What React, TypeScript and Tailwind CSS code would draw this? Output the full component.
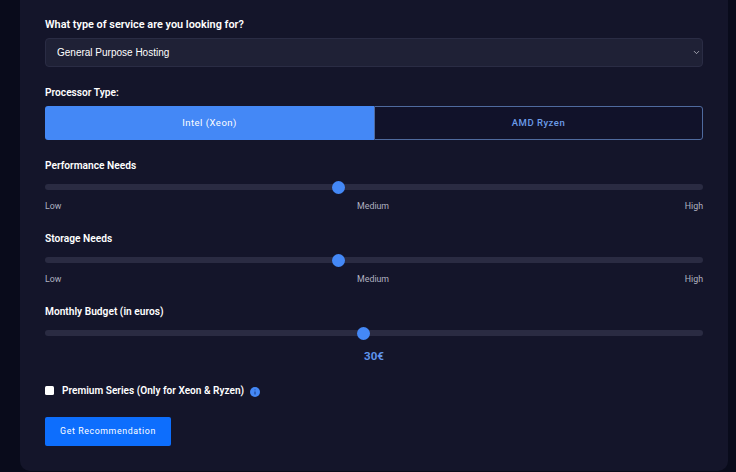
import { ChevronDown } from "lucide-react";

const rangeClass =
  "block w-full h-[6px] appearance-none rounded-[3px] bg-[#2a2b42] cursor-pointer outline-none [&::-webkit-slider-thumb]:appearance-none [&::-webkit-slider-thumb]:w-[13px] [&::-webkit-slider-thumb]:h-[13px] [&::-webkit-slider-thumb]:rounded-full [&::-webkit-slider-thumb]:bg-[#4488f6]";

const labelClass = "block text-[10.2px] leading-[14px] font-semibold text-white";

function Scale({ label, value }: { label: string; value: number }) {
  return (
    <div>
      <label className={labelClass}>{label}</label>
      <div className="mt-[7px] flex h-[14px] items-center">
        <input type="range" min={0} max={1000} defaultValue={value} className={rangeClass} />
      </div>
      <div className="mt-[5px] flex justify-between text-[8.8px] leading-[14px] text-[#b0b2c0]">
        <span>Low</span>
        <span>Medium</span>
        <span>High</span>
      </div>
    </div>
  );
}

export default function App() {
  return (
    <div className="h-[472px] overflow-hidden bg-[#090b1b] font-['Roboto',sans-serif] pl-[20px] pr-[8px]">
      <div className="h-[471px] rounded-b-[10px] bg-[#14152a] px-[25px] pt-[18px]">
        <label className="block text-[10.9px] leading-[14px] font-semibold text-white">
          What type of service are you looking for?
        </label>
        <div className="relative mt-[6px]">
          <select className="block h-[29px] w-full appearance-none rounded-[4px] border border-[#2a2c44] bg-[#1f2136] pl-[11px] font-['Liberation_Sans',sans-serif] text-[10px] text-white outline-none">
            <option>General Purpose Hosting</option>
            <option>Game Server Hosting</option>
            <option>Storage Hosting</option>
          </select>
          <ChevronDown className="pointer-events-none absolute right-[2px] top-[10px] h-[9px] w-[9px] text-[#c8c9d2]" strokeWidth={2} />
        </div>

        <div className={`mt-[19px] ${labelClass}`}>Processor Type:</div>
        <div className="mt-[6px] flex h-[34px]">
          <button className="w-1/2 rounded-l-[3px] bg-[#4488f6] text-[9.5px] tracking-[0.5px] text-white">
            Intel (Xeon)
          </button>
          <button className="w-1/2 rounded-r-[3px] border border-[#4f6a9e] bg-[#11122a] text-[9.5px] font-medium tracking-[0.5px] text-[#6b9be8]">
            AMD Ryzen
          </button>
        </div>

        <div className="mt-[19px]">
          <Scale label="Performance Needs" value={445} />
        </div>
        <div className="mt-[19px]">
          <Scale label="Storage Needs" value={445} />
        </div>

        <div className="mt-[19px]">
          <label className={labelClass}>Monthly Budget (in euros)</label>
          <div className="mt-[7px] flex h-[14px] items-center">
            <input type="range" min={0} max={1000} defaultValue={483} className={rangeClass} />
          </div>
          <div className="mt-[9px] text-center text-[11.5px] leading-[14px] font-bold text-[#5f93ea]">30€</div>
        </div>

        <div className="mt-[21px] flex items-start">
          <input type="checkbox" className="mt-[2px] h-[9px] w-[9px] appearance-none rounded-[1.5px] bg-white" />
          <span className="ml-[8px] text-[10.1px] leading-[14px] font-semibold text-white">
            Premium Series (Only for Xeon &amp; Ryzen)
          </span>
          <svg viewBox="0 0 10 10" className="ml-[6px] mt-[3px] h-[10px] w-[10px]">
            <circle cx="5" cy="5" r="5" fill="#4488f6" />
            <path d="M5 4.4v3M5 2.4v.9" stroke="#1d3f86" strokeWidth="1.1" fill="none" />
          </svg>
        </div>

        <button className="mt-[19px] block h-[29px] w-[126px] rounded-[2px] bg-[#0d6efd] text-[8.8px] tracking-[0.6px] text-white">
          Get Recommendation
        </button>
      </div>
    </div>
  );
}
